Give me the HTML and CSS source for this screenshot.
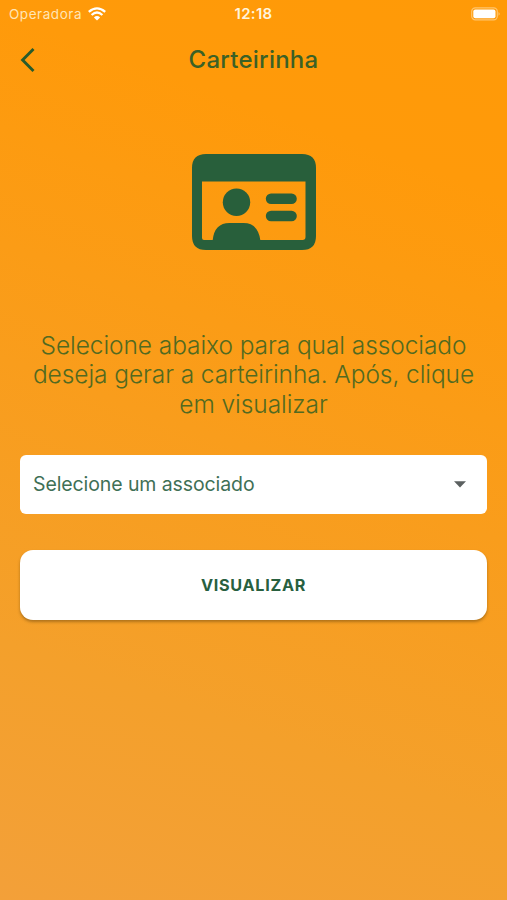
FILE: index.html
```html
<!DOCTYPE html>
<html lang="pt-BR">
<head>
<meta charset="utf-8">
<meta name="viewport" content="width=device-width">
<title>Carteirinha</title>
<link rel="stylesheet" href="styles.css">
</head>
<body>
<div class="status">
  <div class="carrier"><span class="carrier-name">Operadora</span>
    <svg class="wifi" width="18" height="14" viewBox="0 0 18 14" fill="none" stroke="currentColor" stroke-width="2.3"><path d="M.8 4.8Q9-2.1 17.2 4.8M3.6 8Q9 3.1 14.4 8"/><path d="M9 13.5 5.9 10.4Q9 7.7 12.1 10.4Z" fill="currentColor" stroke="none"/></svg>
  </div>
  <span class="time">12:18</span>
  <svg class="battery" width="30" height="14" viewBox="0 0 30 14"><rect x=".7" y=".8" width="25.6" height="12" rx="3.6" fill="none" stroke="#ffc56f" stroke-width="1.2"/><rect x="2.3" y="2.6" width="22.2" height="8.6" rx="2" fill="#fff"/><path d="M27.5 4.9Q30 6.8 27.5 8.7Z" fill="#ffc56f"/></svg>
</div>
<header class="header">
  <button class="back" aria-label="Voltar"><svg width="16" height="26" viewBox="0 0 16 26" fill="none" stroke="currentColor" stroke-width="2.9"><path d="M13.5 2 2.6 13 13.5 24"/></svg></button>
  <h1 class="title">Carteirinha</h1>
</header>
<main class="content">
  <svg class="card-icon" width="124" height="97" viewBox="0 0 124 97" fill="currentColor">
    <path fill-rule="evenodd" d="M14 0H110Q124 0 124 14V82Q124 96 110 96H14Q0 96 0 82V14Q0 0 14 0ZM10 27.5V84Q10 86 12 86H20.7Q22.5 69 37.5 69H51.5Q66 69 68.3 86H110.5Q113.5 86 113.5 83V27.5Z"/>
    <circle cx="44.5" cy="48.2" r="13.7"/>
    <rect x="73.8" y="39.5" width="31" height="10.5" rx="5.25"/>
    <rect x="73.8" y="56.8" width="31" height="10.5" rx="5.25"/>
  </svg>
  <p class="intro">Selecione abaixo para qual associado<br>deseja gerar a carteirinha. Após, clique<br>em visualizar</p>
  <div class="select"><span class="select-label">Selecione um associado</span><svg width="12" height="7" viewBox="0 0 12 7"><path d="M0 .3H12L6 6.5Z" fill="#5b6060"/></svg></div>
  <button class="submit">VISUALIZAR</button>
</main>
</body>
</html>
```

FILE: styles.css
```css
* { box-sizing: border-box; }
body {
  margin: 0;
  height: 900px;
  overflow: hidden;
  font-family: Inter, "Liberation Sans", sans-serif;
  color: #285f3b;
  background: linear-gradient(200deg, #ff9a07 0%, #ff9a0a 18%, #f99d1c 50%, #f4a02b 76%, #f3a039 100%);
}
button { border: 0; font: inherit; color: inherit; padding: 0; }
.status {
  display: grid;
  grid-template-columns: 1fr auto 1fr;
  align-items: center;
  height: 27px;
  padding: 0 6px 0 9px;
  color: #fff4dc;
  font-size: 13.5px;
}
.carrier { display: flex; align-items: center; gap: 5.5px; }
.carrier-name { color: #ffe5b5; letter-spacing: .55px; }
.wifi { color: #fff; }
.time { margin-right: 3px; font-weight: 600; font-size: 15px; letter-spacing: .3px; }
.battery { justify-self: end; }
.header {
  display: grid;
  grid-template-columns: 48px 1fr 48px;
  align-items: center;
  height: 66px;
  padding: 0 20px;
}
.back { display: flex; background: none; color: #285b2b; }
.title {
  margin: 0;
  text-align: center;
  font-size: 24px;
  line-height: 30px;
  font-weight: 500;
  letter-spacing: .25px;
  color: #3b6126;
}
.content {
  display: flex;
  flex-direction: column;
  padding: 61px 20px 0;
}
.card-icon { align-self: center; }
.intro {
  margin: 80px -20px 0;
  text-align: center;
  font-size: 24.5px;
  line-height: 29.4px;
  font-weight: 300;
  letter-spacing: -.08px;
  color: #526a20;
  white-space: nowrap;
}
.select {
  display: flex;
  align-items: center;
  justify-content: space-between;
  height: 59px;
  margin-top: 36px;
  padding: 0 21px 0 13px;
  border-radius: 6px;
  background: #fff;
}
.select-label { margin-top: -2px; font-size: 19.5px; letter-spacing: -.1px; color: #3f7056; }
.submit {
  height: 70px;
  margin-top: 36px;
  border-radius: 13px;
  background: #fff;
  box-shadow: 0 2px 3px rgba(90, 60, 10, .45);
  font-size: 16.2px;
  font-weight: 700;
  letter-spacing: .7px;
  color: #28603f;
}
```
